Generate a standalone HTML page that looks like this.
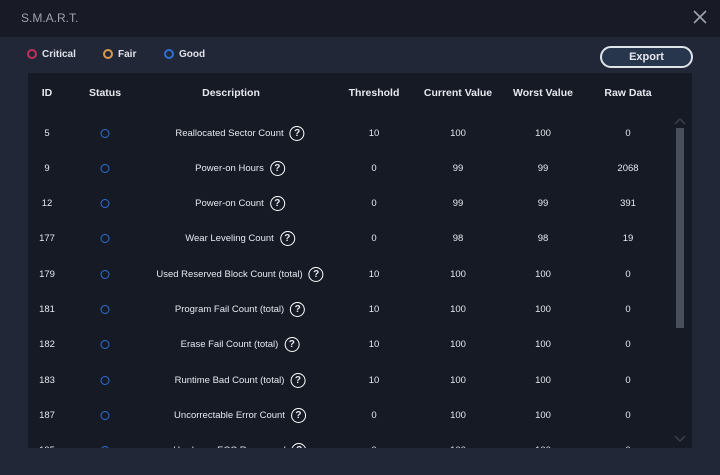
<!DOCTYPE html><html><head><style>
body{margin:0;width:720px;height:475px;background:#222737;font-family:"Liberation Sans",sans-serif;color:#e6e8ee;position:relative;overflow:hidden}
.top{position:absolute;left:0;top:0;width:720px;height:37px;background:#181b25}
.t{position:absolute;left:21px;top:11px;font-size:12px;color:#9ea3ad}
.x{position:absolute;left:693px;top:10px}
.leg{position:absolute;top:49px;font-size:10px;font-weight:bold;color:#dfe2e8}
.dot{display:inline-block;width:6px;height:6px;border:2px solid;border-radius:50%;vertical-align:-2px;margin-right:5px}
.exp{position:absolute;left:600px;top:46px;width:89px;height:18px;border:2px solid #dfe3ea;border-radius:11px;background:#28364d;font-size:11px;font-weight:bold;text-align:center;line-height:18px}
.panel{position:absolute;left:28px;top:73px;width:664px;height:375px;background:#161a25;overflow:hidden}
.c{position:absolute;transform:translateX(-50%);white-space:nowrap;font-size:9.5px;height:16px;display:flex;align-items:center}
.h{font-weight:bold;font-size:10.5px;top:12px}
.q{display:inline-block;width:13px;height:13px;border:1.6px solid #fff;border-radius:50%;text-align:center;line-height:13px;font-size:10px;font-weight:bold;margin-left:6px}
.s{display:inline-block;width:7px;height:7px;border:1.8px solid #2e6fd6;border-radius:50%}
.sb{position:absolute;left:648px;top:55px;width:8px;height:200px;background:#4a4f5c}
</style></head><body>
<div class="top"><div class="t">S.M.A.R.T.</div>
<svg class="x" width="14" height="14"><path d="M1 1L13 13M13 1L1 13" stroke="#9ea3ad" stroke-width="1.6"/></svg></div>
<div class="leg" style="left:27px"><span class="dot" style="border-color:#c0305a"></span>Critical</div>
<div class="leg" style="left:103px"><span class="dot" style="border-color:#d99a4a"></span>Fair</div>
<div class="leg" style="left:164px"><span class="dot" style="border-color:#2e6fd6"></span>Good</div>
<div class="exp">Export</div>
<div class="panel" id="p">
<div class="c h" style="left:19px">ID</div>
<div class="c h" style="left:77px">Status</div>
<div class="c h" style="left:203px">Description</div>
<div class="c h" style="left:346px">Threshold</div>
<div class="c h" style="left:430px">Current Value</div>
<div class="c h" style="left:515px">Worst Value</div>
<div class="c h" style="left:600px">Raw Data</div>
<svg style="position:absolute;left:646px;top:44px" width="12" height="8"><path d="M1 7L6 2L11 7" stroke="#3a3f4b" stroke-width="1.5" fill="none"/></svg>
<div class="sb"></div>
<svg style="position:absolute;left:646px;top:362px" width="12" height="8"><path d="M1 1L6 6L11 1" stroke="#3a3f4b" stroke-width="1.5" fill="none"/></svg>
<script>
var r=[["5","Reallocated Sector Count","10","100","100","0"],["9","Power-on Hours","0","99","99","2068"],["12","Power-on Count","0","99","99","391"],["177","Wear Leveling Count","0","98","98","19"],["179","Used Reserved Block Count (total)","10","100","100","0"],["181","Program Fail Count (total)","10","100","100","0"],["182","Erase Fail Count (total)","10","100","100","0"],["183","Runtime Bad Count (total)","10","100","100","0"],["187","Uncorrectable Error Count","0","100","100","0"],["195","Hardware ECC Recovered","0","100","100","0"]];
var h="";r.forEach(function(a,i){var y=52+i*35.3;
h+='<div class="c" style="left:19px;top:'+y+'px">'+a[0]+'</div><div class="c" style="left:77px;top:'+y+'px"><span class="s"></span></div><div class="c" style="left:212px;top:'+y+'px">'+a[1]+'<span class="q">?</span></div><div class="c" style="left:346px;top:'+y+'px">'+a[2]+'</div><div class="c" style="left:430px;top:'+y+'px">'+a[3]+'</div><div class="c" style="left:515px;top:'+y+'px">'+a[4]+'</div><div class="c" style="left:600px;top:'+y+'px">'+a[5]+'</div>';});
document.write(h);
</script>
</div>
</body></html>
